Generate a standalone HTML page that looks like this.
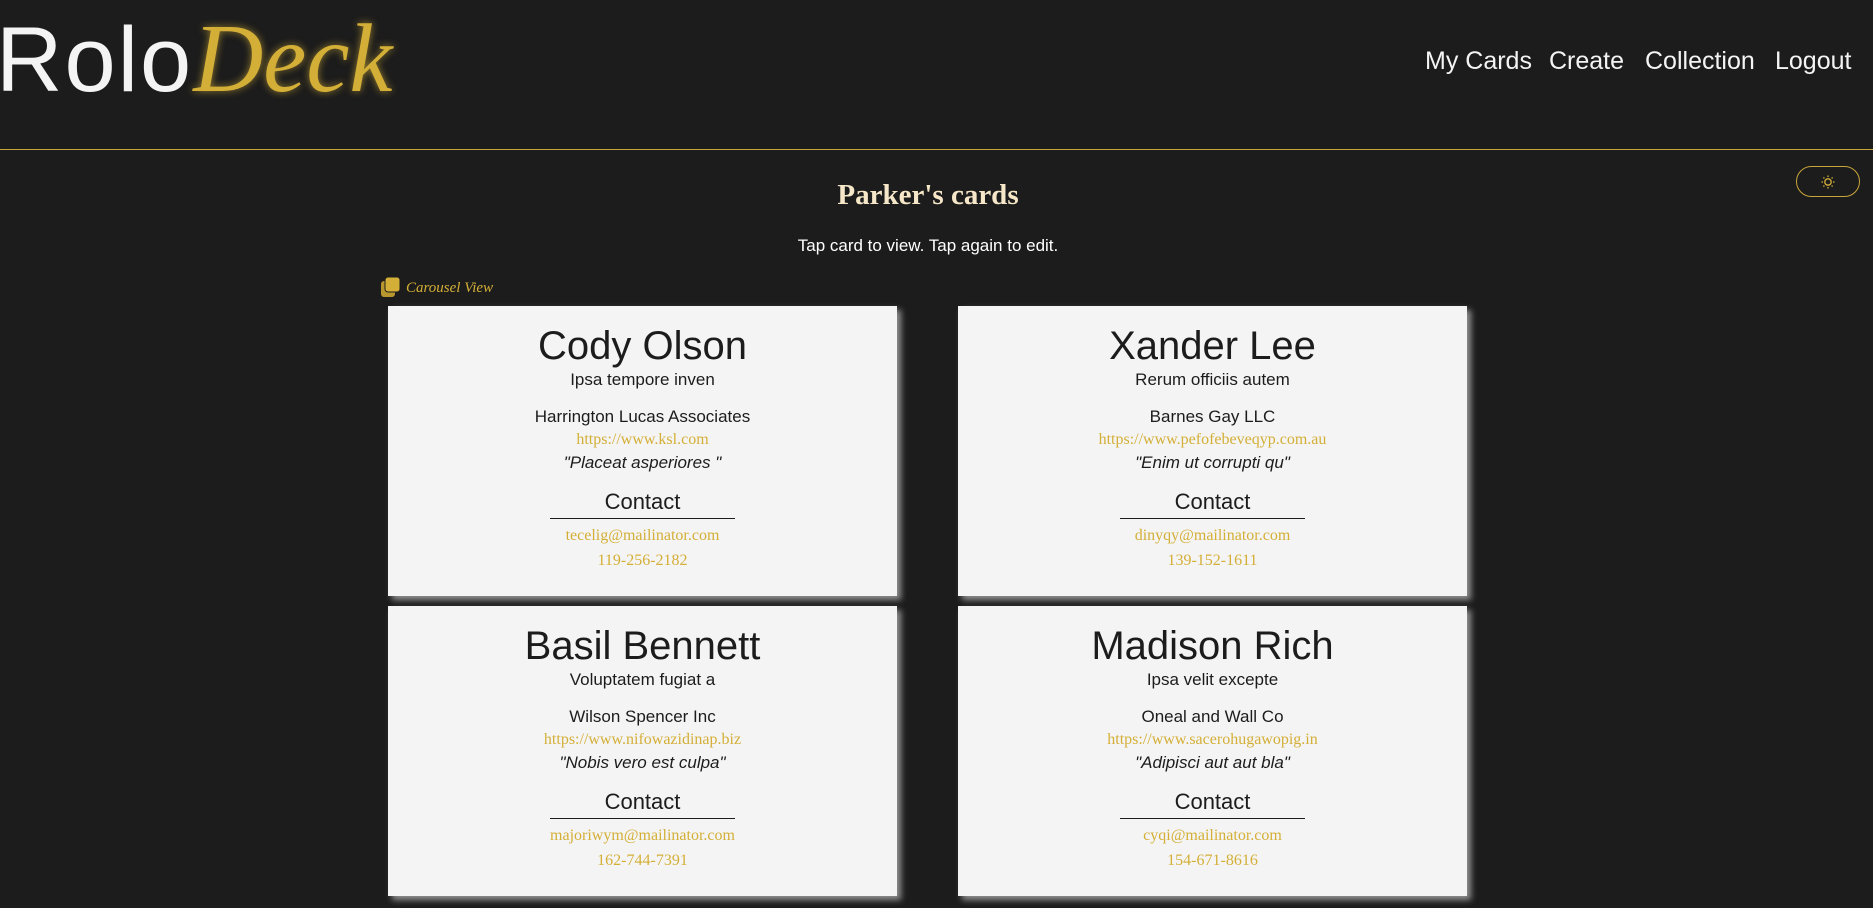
<!DOCTYPE html>
<html><head><meta charset="utf-8"><style>
*{margin:0;padding:0;box-sizing:border-box}
body{width:1873px;height:908px;background:#1c1c1c;position:relative;overflow:hidden;font-family:"Liberation Sans","DejaVu Sans",sans-serif}
.abs{position:absolute}
.logo{left:-4px;top:4px;font-size:92px;line-height:110px;white-space:nowrap}
.logo .r{color:#f4f4f4;letter-spacing:2px}
.logo .d{color:#d4af37;font-family:"Liberation Serif",serif;font-style:italic;font-size:97px;text-shadow:0 0 8px rgba(212,175,55,.7)}
.nav{top:46px;font-size:25px;color:#f4f4f4;line-height:30px}
.hr{left:0;top:149px;width:1873px;height:1px;background:#c9a53a}
.toggle{left:1796px;top:166px;width:64px;height:31px;border:1px solid #c9a53a;border-radius:16px}
.title{left:0;width:1856px;top:176px;text-align:center;font-family:"Liberation Serif",serif;font-weight:bold;font-size:29px;color:#f6e7c8;line-height:38px}
.sub{left:0;width:1856px;top:236px;text-align:center;font-size:17px;color:#fff;line-height:20px}
.cv{left:406px;top:279px;font-family:"Liberation Serif",serif;font-style:italic;font-size:15px;color:#d4af37;line-height:18px}
.card{width:509px;height:290px;background:#f4f4f4;box-shadow:4px 4px 6px rgba(160,160,160,.9)}
.card div{position:absolute;left:0;width:100%;text-align:center;white-space:nowrap;color:#1c1c1c}
.n{top:20px;font-size:40px;line-height:40px}
.s{font-size:17px;line-height:17px}
.u{top:126px;font-family:"Liberation Serif",serif;font-size:16px;line-height:15px;color:#d4af37!important}
.q{top:148px;font-style:italic}
.c{top:185px;font-size:22px;line-height:22px}
.l{top:212px;height:1px;left:162px!important;width:185px!important;background:#1c1c1c}
.e{top:222px;font-family:"Liberation Serif",serif;font-size:16px;line-height:15px;color:#d4af37!important}
.p{top:247px;font-family:"Liberation Serif",serif;font-size:16px;line-height:16px;color:#d4af37!important}
</style></head><body>
<div class="abs logo"><span class="r">Rolo</span><span class="d">Deck</span></div>
<div class="abs nav" style="left:1425px">My Cards</div>
<div class="abs nav" style="left:1549px">Create</div>
<div class="abs nav" style="left:1645px">Collection</div>
<div class="abs nav" style="left:1775px">Logout</div>
<div class="abs hr"></div>
<div class="abs toggle"><svg width="64" height="31" viewBox="0 0 64 31" style="position:absolute;left:-1px;top:-1px"><g stroke="#d4af37" stroke-width="1.3" fill="none"><circle cx="32" cy="16" r="3.2"/><path d="M32 9.5v1.5M32 21v1.5M25.5 16h1.5M37 16h1.5M27.4 11.4l1 1M35.6 19.6l1 1M27.4 20.6l1-1M35.6 12.4l1-1"/></g></svg></div>
<div class="abs title">Parker's cards</div>
<div class="abs sub">Tap card to view. Tap again to edit.</div>
<svg class="abs" style="left:380px;top:276px" width="22" height="22" viewBox="0 0 22 22"><rect x="1" y="5" width="14" height="16" rx="3" fill="#b8962e"/><rect x="5" y="1" width="15" height="15" rx="3" fill="#d4af37" stroke="#1c1c1c" stroke-width="1"/></svg>
<div class="abs cv">Carousel View</div>

<div class="abs card" style="left:388px;top:306px">
<div class="n">Cody Olson</div><div class="s" style="top:65px">Ipsa tempore inven</div><div class="s" style="top:102px">Harrington Lucas Associates</div><div class="u">https://www.ksl.com</div><div class="s q">"Placeat asperiores "</div><div class="c">Contact</div><div class="l"></div><div class="e">tecelig@mailinator.com</div><div class="p">119-256-2182</div></div>

<div class="abs card" style="left:958px;top:306px">
<div class="n">Xander Lee</div><div class="s" style="top:65px">Rerum officiis autem</div><div class="s" style="top:102px">Barnes Gay LLC</div><div class="u">https://www.pefofebeveqyp.com.au</div><div class="s q">"Enim ut corrupti qu"</div><div class="c">Contact</div><div class="l"></div><div class="e">dinyqy@mailinator.com</div><div class="p">139-152-1611</div></div>

<div class="abs card" style="left:388px;top:606px">
<div class="n">Basil Bennett</div><div class="s" style="top:65px">Voluptatem fugiat a</div><div class="s" style="top:102px">Wilson Spencer Inc</div><div class="u">https://www.nifowazidinap.biz</div><div class="s q">"Nobis vero est culpa"</div><div class="c">Contact</div><div class="l"></div><div class="e">majoriwym@mailinator.com</div><div class="p">162-744-7391</div></div>

<div class="abs card" style="left:958px;top:606px">
<div class="n">Madison Rich</div><div class="s" style="top:65px">Ipsa velit excepte</div><div class="s" style="top:102px">Oneal and Wall Co</div><div class="u">https://www.sacerohugawopig.in</div><div class="s q">"Adipisci aut aut bla"</div><div class="c">Contact</div><div class="l"></div><div class="e">cyqi@mailinator.com</div><div class="p">154-671-8616</div></div>
</body></html>
